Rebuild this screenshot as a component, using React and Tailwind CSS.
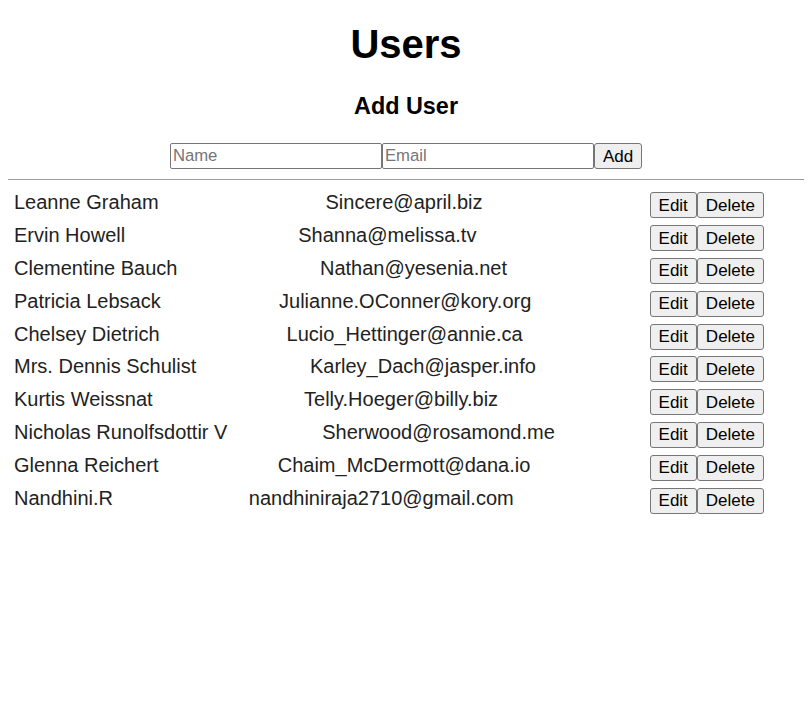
import React, { useState } from "react";

const initialUsers = [
  { id: 1, name: "Leanne Graham", email: "Sincere@april.biz" },
  { id: 2, name: "Ervin Howell", email: "Shanna@melissa.tv" },
  { id: 3, name: "Clementine Bauch", email: "Nathan@yesenia.net" },
  { id: 4, name: "Patricia Lebsack", email: "Julianne.OConner@kory.org" },
  { id: 5, name: "Chelsey Dietrich", email: "Lucio_Hettinger@annie.ca" },
  { id: 6, name: "Mrs. Dennis Schulist", email: "Karley_Dach@jasper.info" },
  { id: 7, name: "Kurtis Weissnat", email: "Telly.Hoeger@billy.biz" },
  { id: 8, name: "Nicholas Runolfsdottir V", email: "Sherwood@rosamond.me" },
  { id: 9, name: "Glenna Reichert", email: "Chaim_McDermott@dana.io" },
  { id: 10, name: "Nandhini.R", email: "nandhiniraja2710@gmail.com" },
];

const btn =
  "h-[26px] px-[8px] text-[17px] leading-none text-black bg-[#efefef] border border-[#767676] rounded-[3px]";

const App = () => {
  const [users] = useState(initialUsers);
  const [name, setName] = useState("");
  const [email, setEmail] = useState("");

  return (
    <div className="min-h-screen bg-white px-[8px] text-black font-['Liberation_Sans',Arial,sans-serif]">
      <h1 className="pt-[21px] text-[40px] leading-[46px] font-bold text-center">Users</h1>

      <h2 className="mt-[26px] text-[23.4px] leading-[27px] font-bold text-center">Add User</h2>

      <div className="mt-[23px] flex justify-center">
        <input
          value={name}
          onChange={(e) => setName(e.target.value)}
          placeholder="Name"
          className="w-[212px] h-[26px] px-[2px] text-[16.7px] border border-[#767676] rounded-[2px] placeholder:text-[#757575] outline-none"
        />
        <input
          value={email}
          onChange={(e) => setEmail(e.target.value)}
          placeholder="Email"
          className="w-[212px] h-[26px] px-[2px] text-[16.7px] border border-[#767676] rounded-[2px] placeholder:text-[#757575] outline-none"
        />
        <button className={btn}>Add</button>
      </div>

      <div className="mt-[10px] border-t border-[#9a9a9a]" />

      <div className="mt-[6px]">
        {users.map((user) => (
          <div
            key={user.id}
            className="ml-[6px] w-[750px] h-[32.8px] flex items-center justify-between text-[20px] text-[#222]"
          >
            <span>{user.name}</span>
            <span>{user.email}</span>
            <div className="flex pt-[6px]">
              <button className={btn}>Edit</button>
              <button className={btn}>Delete</button>
            </div>
          </div>
        ))}
      </div>
    </div>
  );
};

export default App;
